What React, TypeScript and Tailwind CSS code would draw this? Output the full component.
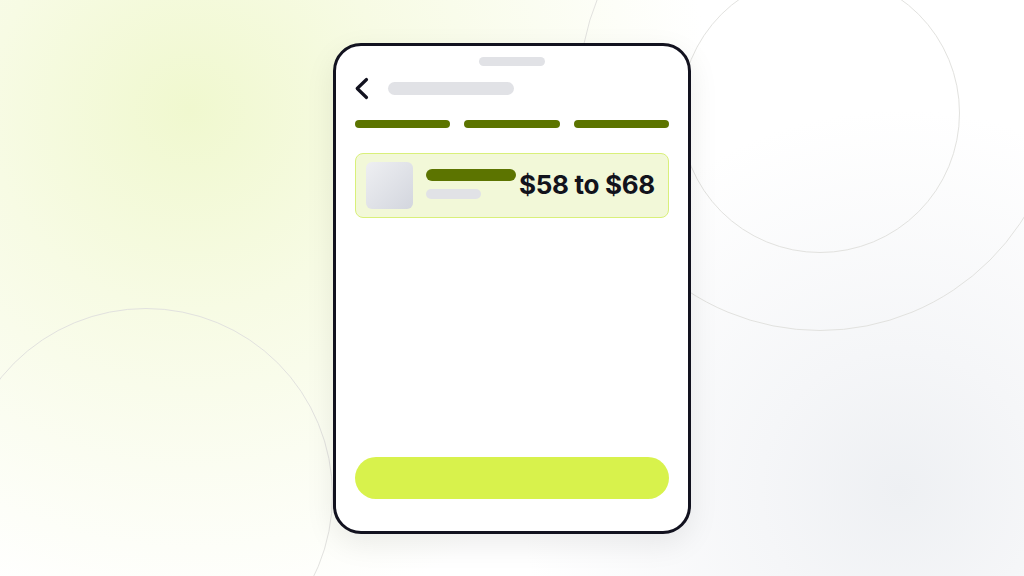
const Circle = ({ className }: { className: string }) => (
  <div className={`absolute rounded-full border-[1.5px] border-[#e2e2df] ${className}`} />
);

const BackIcon = () => (
  <svg width="16" height="23" viewBox="0 0 16 23" fill="none" className="shrink-0 -ml-[1px]">
    <path d="M12.5 2.5 L3.2 11.5 L12.5 20.5" stroke="#12121f" strokeWidth="3.2" strokeLinecap="round" strokeLinejoin="round" />
  </svg>
);

const App = () => {
  return (
    <div
      className="relative w-[1024px] h-[576px] overflow-hidden bg-white flex items-center justify-center"
      style={{ fontFamily: "Inter, 'Noto Sans', sans-serif" }}
    >
      {/* Background glows */}
      <div className="absolute inset-0 bg-[radial-gradient(circle_at_190px_110px,#f0f8cf_0px,#f7fbe4_200px,rgba(255,255,255,0)_520px)]" />
      <div className="absolute inset-0 bg-[radial-gradient(circle_at_900px_490px,#eef0f3_0px,#f5f6f8_140px,rgba(255,255,255,0)_380px)]" />

      {/* Decorative rings */}
      <Circle className="left-[680px] top-[-27px] w-[280px] h-[280px]" />
      <Circle className="left-[579px] top-[-151px] w-[482px] h-[482px]" />
      <Circle className="left-[-41px] top-[308px] w-[374px] h-[374px]" />

      {/* Phone */}
      <div className="relative w-[358px] h-[491px] rounded-[28px] border-[3px] border-[#12121f] bg-white shadow-[0_10px_30px_rgba(0,0,0,0.08)] flex flex-col px-[19px] pt-[11px] pb-[32px]">
        <div className="mx-auto h-[9px] w-[66px] rounded-full bg-[#e1e2e6]" />

        {/* Header */}
        <div className="mt-[12px] flex items-center h-[21px] gap-[18px]">
          <BackIcon />
          <div className="h-[13px] w-[126px] rounded-full bg-[#e1e2e6]" />
        </div>

        {/* Steps */}
        <div className="mt-[21px] grid grid-cols-3 gap-[14px]">
          <div className="h-[8px] rounded-full bg-[#5c7400]" />
          <div className="h-[8px] rounded-full bg-[#5c7400]" />
          <div className="h-[8px] rounded-full bg-[#5c7400]" />
        </div>

        {/* Selected option */}
        <div className="mt-[25px] h-[65px] rounded-[8px] border border-[#d9f07a] bg-[#f2f8d8] flex items-center pl-[10px] pr-[13px]">
          <div className="w-[47px] h-[47px] rounded-[6px] bg-[linear-gradient(135deg,#eeeff2,#d3d6de)]" />
          <div className="ml-[13px] flex flex-col gap-[8px] -mt-[2px]">
            <div className="h-[12px] w-[90px] rounded-full bg-[#5c7400]" />
            <div className="h-[10px] w-[55px] rounded-full bg-[#e1e2e6]" />
          </div>
          <span className="ml-auto text-[26px] font-bold tracking-[-0.3px] text-[#12131c] leading-none">
            $58 to $68
          </span>
        </div>

        <div className="flex-1" />

        {/* CTA */}
        <div className="h-[42px] rounded-full bg-[#d8f24c]" />
      </div>
    </div>
  );
};

export default App;
